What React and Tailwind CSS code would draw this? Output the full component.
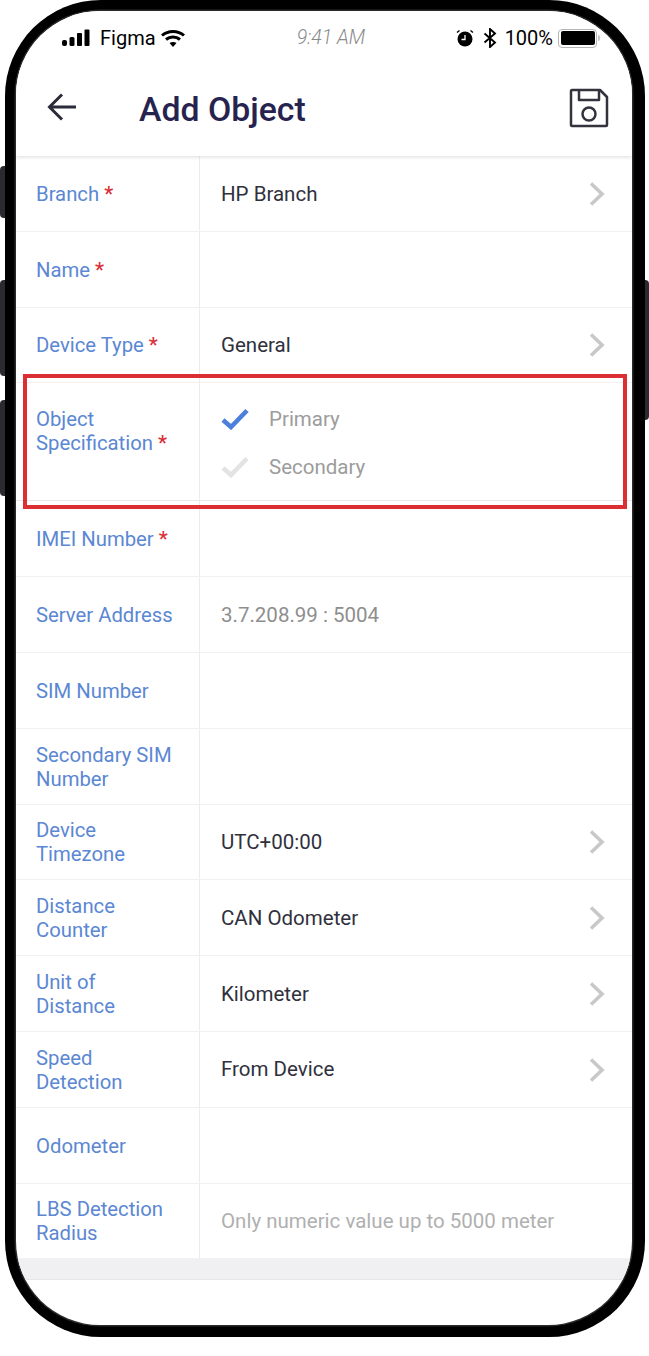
const Back = () => (
  <svg width="32" height="32" viewBox="0 0 32 32" fill="none" stroke="#2b2b3a" strokeWidth="3">
    <path d="M30 16H4M16 3.500L3.500 16L16 28.500" />
  </svg>
);
const Save = () => (
  <svg width="40" height="40" viewBox="0 0 40 40" fill="none" stroke="#33333d" strokeWidth="2.500" strokeLinejoin="round">
    <path d="M2 3a1 1 0 0 1 1-1h28l7 7v28a1 1 0 0 1-1 1H3a1 1 0 0 1-1-1z" />
    <path d="M10 2v10h20V2" />
    <circle cx="20" cy="26" r="6.500" />
  </svg>
);
const Chevron = () => (
  <svg width="18" height="26" viewBox="0 0 18 26" fill="none" stroke="#c8c8c8" strokeWidth="3.600">
    <path d="M3 2.500L14 13L3 23.500" />
  </svg>
);
const Check = ({ color }) => (
  <svg width="28" height="22" viewBox="0 0 28 22" fill="none" stroke={color} strokeWidth="4.600">
    <path d="M2 12L10 19L26 2.500" />
  </svg>
);
const Signal = () => (
  <svg width="28" height="18" viewBox="0 0 28 18" fill="#000">
    <rect x="0" y="11" width="5" height="6" rx="2" />
    <rect x="7.500" y="8" width="5" height="9" rx="1.500" />
    <rect x="15" y="4" width="5" height="13" rx="1" />
    <rect x="22.500" y="0.500" width="5" height="16.500" rx="1" />
  </svg>
);
const Wifi = () => (
  <svg width="24" height="18" viewBox="0 0 24 18" fill="none" stroke="#000" strokeWidth="3">
    <path d="M1 6.500C7 1 17 1 23 6.500" />
    <path d="M5 10.500C9 7 15 7 19 10.500" />
    <path d="M12 18L8.500 14C10.500 12.500 13.500 12.500 15.500 14Z" fill="#000" stroke="none" />
  </svg>
);
const Alarm = () => (
  <svg width="18" height="18" viewBox="0 0 18 18">
    <circle cx="9" cy="10" r="7.500" fill="#000" />
    <path d="M9 6v4.500H5.500" fill="none" stroke="#fff" strokeWidth="1.300" />
    <path d="M1 3.500L3.500 1.500M17 3.500L14.500 1.500" stroke="#000" strokeWidth="1.400" />
  </svg>
);
const Bluetooth = () => (
  <svg width="14" height="20" viewBox="0 0 14 20" fill="none" stroke="#000" strokeWidth="1.900">
    <path d="M1.500 5.500L12 14.500L7 19V1L12 5.500L1.500 14.500" />
  </svg>
);
const Battery = () => (
  <div className="flex items-center">
    <div className="w-[39px] h-[19px] rounded-[4px] border-[1.500px] border-[#b5b5b5] p-[1.500px]">
      <div className="w-full h-full bg-black rounded-[2px]" />
    </div>
    <div className="w-[2px] h-[6px] bg-[#c5c5c5] ml-[1px] rounded-r-sm" />
  </div>
);

const Star = () => <span className="text-[#d8333a] ml-[5px] font-medium">*</span>;

const rows = [
  { label: "Branch", req: true, value: "HP Branch", chevron: true },
  { label: "Name", req: true },
  { label: "Device Type", req: true, value: "General", chevron: true },
  { spec: true },
  { label: "IMEI Number", req: true },
  { label: "Server Address", value: "3.7.208.99 : 5004", muted: true },
  { label: "SIM Number" },
  { label: ["Secondary SIM", "Number"] },
  { label: ["Device", "Timezone"], value: "UTC+00:00", chevron: true },
  { label: ["Distance", "Counter"], value: "CAN Odometer", chevron: true },
  { label: ["Unit of", "Distance"], value: "Kilometer", chevron: true },
  { label: ["Speed", "Detection"], value: "From Device", chevron: true },
  { label: "Odometer" },
  { label: ["LBS Detection", "Radius"], value: "Only numeric value up to 5000 meter", placeholder: true },
];

function Row({ r }) {
  if (r.spec) {
    return (
      <div className="flex h-[118px] border-b border-[#e9e9ec]">
        <div className="w-[184px] shrink-0 border-r border-[#ececef] pl-5 pt-[24px] text-[20.3px] leading-6 text-[#5b87d3]">
          <div>Object</div>
          <div>Specification<Star /></div>
        </div>
        <div className="flex-1 pl-[21px] pt-[24px] flex flex-col gap-6 text-[20.5px] leading-6 text-[#9c9c9c]">
          <div className="flex items-center gap-[20px]">
            <Check color="#4d7fdc" />
            <span>Primary</span>
          </div>
          <div className="flex items-center gap-[20px]">
            <Check color="#e3e3e3" />
            <span>Secondary</span>
          </div>
        </div>
      </div>
    );
  }
  const lines = Array.isArray(r.label) ? r.label : [r.label];
  return (
    <div className="flex h-[75.8px] border-b border-[#f1f1f3] last:border-[#e6e6e8]">
      <div className="w-[184px] shrink-0 border-r border-[#ececef] pl-5 pt-[1px] flex flex-col justify-center text-[20.3px] leading-6 text-[#5b87d3]">
        {lines.map((l) => (
          <div key={l} className="whitespace-nowrap">
            {l}
            {r.req && <Star />}
          </div>
        ))}
      </div>
      <div className="flex-1 flex items-center justify-between pl-[21px] pr-[26px] pt-[1px] text-[20.5px]">
        {r.value ? (
          <span className={r.placeholder ? "text-[#b0b0b0]" : r.muted ? "text-[#8e8e8e]" : "text-[#30303d]"}>{r.value}</span>
        ) : (
          <span />
        )}
        {r.chevron && <Chevron />}
      </div>
    </div>
  );
}

export default function App() {
  return (
    <div className="relative w-[649px] h-[1356px] bg-white font-['Roboto',sans-serif] overflow-hidden">
      <div className="absolute left-0 top-[166px] w-[6px] h-[52px] bg-[#2a2a30] rounded-l-sm" />
      <div className="absolute left-0 top-[280px] w-[6px] h-[96px] bg-[#2a2a30] rounded-l-sm" />
      <div className="absolute left-0 top-[400px] w-[6px] h-[96px] bg-[#2a2a30] rounded-l-sm" />
      <div className="absolute right-0 top-[280px] w-[5px] h-[140px] bg-[#2a2a30] rounded-r-sm" />
      <div className="relative ml-[5px] w-[640px] h-[1337px] bg-black rounded-[96px] p-[11px_13px_12px_11px]">
        <div className="w-full h-full bg-white rounded-[84px] overflow-hidden flex flex-col shadow-[0_0_0_1.5px_#2a2a2a]">
          <div className="h-[145px] shrink-0 shadow-[0_1px_4px_rgba(0,0,0,0.14)] relative z-10 bg-white">
            <div className="flex items-center justify-between h-[52px] pl-[46px] pr-[32px] pt-[2px]">
              <div className="flex items-center gap-[5px] w-[200px]">
                <Signal />
                <span className="text-[20px] text-black ml-[5px]">Figma</span>
                <Wifi />
              </div>
              <span className="text-[19.5px] italic font-light text-[#8a8a8a]">9:41 AM</span>
              <div className="flex items-center justify-end w-[200px] gap-[9px]">
                <Alarm />
                <Bluetooth />
                <span className="text-[20px] text-black -ml-[1px]">100%</span>
                <div className="-ml-[4px]"><Battery /></div>
              </div>
            </div>
            <div className="flex items-center justify-between pl-[30px] pr-[23px] h-[61px] mt-[13px]">
              <div className="flex items-center gap-[61px]">
                <Back />
                <span className="text-[33.8px] leading-10 font-medium text-[#26244f] mt-[6px]">Add Object</span>
              </div>
              <div className="mt-[2px]"><Save /></div>
            </div>
          </div>
          <div className="flex-1">
            {rows.map((r, i) => (
              <Row key={i} r={r} />
            ))}
            <div className="h-[21px] bg-[#f0f0f3] border-b border-[#e6e6e9]" />
          </div>
        </div>
      </div>
      <div className="absolute left-[23px] top-[374px] w-[604px] h-[135px] border-[4px] border-[#dc2f33]" />
    </div>
  );
}
